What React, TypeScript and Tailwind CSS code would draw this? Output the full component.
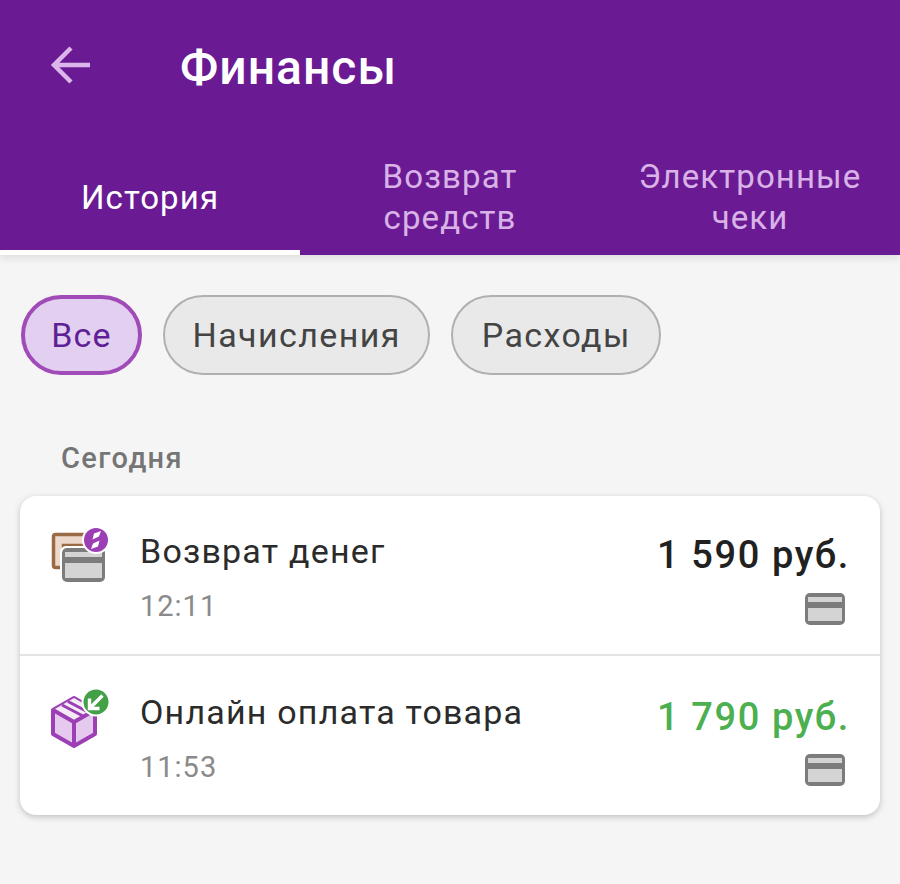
const fontStyle = "font-['Roboto',sans-serif]";

function CardIcon() {
  return (
    <svg width="42" height="34" viewBox="0 0 42 34">
      <rect x="1" y="1" width="40" height="32" rx="5" fill="#7c7c7c" />
      <rect x="4" y="5" width="34" height="5" fill="#d4d4d4" />
      <rect x="4" y="16" width="34" height="13" fill="#d4d4d4" />
    </svg>
  );
}

function RefundIcon() {
  return (
    <svg width="60" height="60" viewBox="0 0 60 60">
      <rect x="3.5" y="8.5" width="36" height="33" rx="2" fill="#ecd9cb" stroke="#9a6a45" strokeWidth="3.5" />
      <path d="M13 24v-5h24" fill="none" stroke="#9a6a45" strokeWidth="2.5" />
      <rect x="10" y="20" width="48" height="38" rx="6" fill="#fff" />
      <rect x="12" y="22" width="43" height="34" rx="5" fill="#7c7c7c" />
      <rect x="15" y="26" width="37" height="5" fill="#d4d4d4" />
      <rect x="15" y="37" width="37" height="15" fill="#d4d4d4" />
      <circle cx="46" cy="14" r="14" fill="#fff" />
      <circle cx="46" cy="14" r="12" fill="#9c3fb5" />
      <path d="M51 5 44 7.5 42.5 13.5 49 10.5ZM41 23 48 20.5 49.5 14.5 43 17.5Z" fill="#fff" />
    </svg>
  );
}

function BoxIcon() {
  return (
    <svg width="60" height="64" viewBox="0 0 60 64">
      <path d="M3 24 24 12l21 12v24L24 60 3 48Z" fill="#e6c9ee" stroke="#9c3fb5" strokeWidth="4" strokeLinejoin="round" />
      <path d="M3 24 24 12l21 12-21 12Z" fill="#f5ebf7" />
      <path d="M3 24l21 12 21-12M24 36v24" fill="none" stroke="#9c3fb5" strokeWidth="4" strokeLinejoin="round" />
      <path d="M12 19l21 11M18 15.5l21 11" fill="none" stroke="#9c3fb5" strokeWidth="3" />
      <circle cx="46" cy="16" r="14.5" fill="#fff" />
      <circle cx="46" cy="16" r="12.5" fill="#43a047" />
      <path d="M52.5 9.5 41 21M39.5 12.5V22.5H49.5" fill="none" stroke="#fff" strokeWidth="3.4" />
    </svg>
  );
}

const rows = [
  { title: "Возврат денег", time: "12:11", amount: "1 590 руб.", color: "text-[#212121]", icon: <RefundIcon /> },
  { title: "Онлайн оплата товара", time: "11:53", amount: "1 790 руб.", color: "text-[#4caf50]", icon: <BoxIcon /> },
];

export default function App() {
  return (
    <div className={`${fontStyle} h-[884px] w-[900px] overflow-hidden bg-[#f5f5f5]`}>
      {/* Header */}
      <div className="relative bg-[#6a1b93] shadow-[0_3px_8px_rgba(0,0,0,0.1)]">
        <div className="flex h-[136px] items-start pt-[39px]">
          <svg className="ml-[49px] mt-[4px]" width="44" height="44" viewBox="0 0 44 44" fill="none">
            <path d="M41 22H4.5M22 5 5 22l17 17" stroke="#dcb6ea" strokeWidth="4.5" />
          </svg>
          <h1 className="ml-[87px] text-[48px] leading-[58px] font-medium tracking-[1px] text-white">Финансы</h1>
        </div>
        <div className="grid h-[119px] grid-cols-3 text-center text-[33px] leading-[41px] tracking-[1.1px]">
          <div className="flex items-center justify-center border-b-[5px] border-white pt-[9px] text-white">История</div>
          <div className="flex items-center justify-center pt-[3px] text-[#d9b3e8]">
            Возврат
            <br />
            средств
          </div>
          <div className="flex items-center justify-center pt-[3px] text-[#d9b3e8]">
            Электронные
            <br />
            чеки
          </div>
        </div>
      </div>

      {/* Filters */}
      <div className="flex gap-[21px] px-[21px] pt-[40px]">
        <div className="flex h-[80px] w-[121px] items-center justify-center rounded-full border-[4px] border-[#a04bb8] bg-[#e3cff0] text-[34px] tracking-[1.2px] text-[#5f1f95]">
          Все
        </div>
        <div className="flex h-[80px] items-center rounded-full border-2 border-[#b0b0b0] bg-[#e9e9e9] px-[27.5px] text-[34px] tracking-[1.4px] text-[#444444]">
          Начисления
        </div>
        <div className="flex h-[80px] items-center rounded-full border-2 border-[#b0b0b0] bg-[#e9e9e9] px-[28.5px] text-[34px] tracking-[1.4px] text-[#444444]">
          Расходы
        </div>
      </div>

      <div className="mt-[63px] pl-[61px] text-[29px] leading-[40px] font-medium tracking-[1.4px] text-[#757575]">Сегодня</div>

      {/* Operations */}
      <div className="mx-[20px] mt-[18px] overflow-hidden rounded-[16px] bg-white shadow-[0_2px_6px_rgba(0,0,0,0.22)]">
        {rows.map((row, idx) => (
          <div
            key={row.title}
            className={`flex items-start pl-[30px] pr-[30px] ${idx === 0 ? "h-[160px] border-b-2 border-[#e4e4e4]" : "h-[159px]"}`}
          >
            <div className="mt-[30px] w-[60px] shrink-0">{row.icon}</div>
            <div className={`ml-[30px] flex-1 ${idx === 0 ? "pt-[33px]" : "pt-[34px]"}`}>
              <div className="text-[34px] leading-[44px] tracking-[1.2px] text-[#2b2b2b]">{row.title}</div>
              <div className="mt-[14px] text-[29px] leading-[38px] tracking-[1px] text-[#8a8a8a]">{row.time}</div>
            </div>
            <div className={`flex flex-col items-end ${idx === 0 ? "pt-[36px]" : "pt-[38px]"}`}>
              <div className={`text-[38px] leading-[46px] font-medium tracking-[1.6px] ${row.color}`}>{row.amount}</div>
              <div className={`mr-[4px] ${idx === 0 ? "mt-[14px]" : "mt-[13px]"}`}>
                <CardIcon />
              </div>
            </div>
          </div>
        ))}
      </div>
    </div>
  );
}
